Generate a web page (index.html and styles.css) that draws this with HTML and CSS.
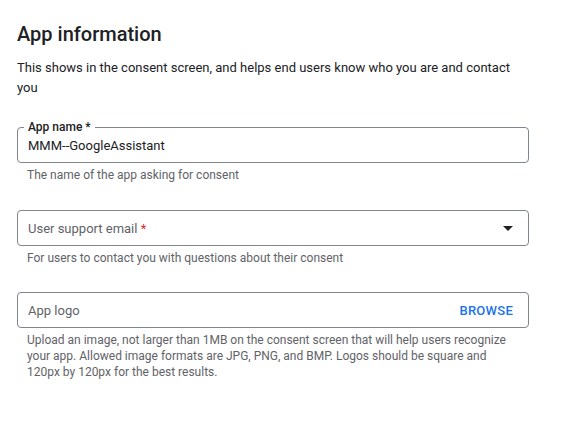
FILE: index.html
```html
<!DOCTYPE html>
<html>
<head>
<meta charset="utf-8">
<link rel="stylesheet" href="styles.css">
</head>
<body>
<main class="page">
  <h1 class="title">App information</h1>
  <p class="desc">This shows in the consent screen, and helps end users know who you are and contact you</p>

  <div class="field">
    <div class="box filled">
      <span class="float-label">App name *</span>
      <span class="value">MMM--GoogleAssistant</span>
    </div>
    <div class="hint">The name of the app asking for consent</div>
  </div>

  <div class="field">
    <div class="box">
      <span class="placeholder">User support email <span class="req">*</span></span>
      <svg class="arrow" width="10" height="5" viewBox="0 0 10 5"><path d="M0 0 L10 0 L5 5 Z" fill="#202124"/></svg>
    </div>
    <div class="hint">For users to contact you with questions about their consent</div>
  </div>

  <div class="field last">
    <div class="box">
      <span class="placeholder">App logo</span>
      <span class="browse">BROWSE</span>
    </div>
    <div class="hint">Upload an image, not larger than 1MB on the consent screen that will help users recognize your app. Allowed image formats are JPG, PNG, and BMP. Logos should be square and 120px by 120px for the best results.</div>
  </div>
</main>
</body>
</html>
```

FILE: styles.css
```css
html, body {
  margin: 0;
  padding: 0;
  background: #ffffff;
}
body {
  font-family: Roboto, "Liberation Sans", sans-serif;
  color: #202124;
}
.page {
  width: 512px;
  padding: 20px 0 0 17px;
  display: flex;
  flex-direction: column;
}
.title {
  margin: 0;
  font-size: 20px;
  font-weight: 500;
  line-height: 28px;
  color: #202124;
}
.desc {
  margin: 10px 0 0 0;
  font-size: 13px;
  line-height: 20px;
  color: #202124;
}
.field {
  display: flex;
  flex-direction: column;
  margin-top: 29px;
}
.field + .field {
  margin-top: 27px;
}
.field + .field.last {
  margin-top: 26px;
}
.box {
  position: relative;
  height: 36px;
  box-sizing: border-box;
  border: 1px solid #80868b;
  border-radius: 4px;
  display: flex;
  align-items: center;
  justify-content: space-between;
  padding: 0 15px 0 10px;
}
.float-label {
  position: absolute;
  top: -9px;
  left: 6px;
  padding: 0 4px;
  background: #fff;
  font-size: 12px;
  font-weight: 500;
  line-height: 16px;
  color: #202124;
}
.value {
  font-size: 13px;
  color: #202124;
  padding-top: 1px;
}
.placeholder {
  font-size: 13px;
  color: #5f6368;
}
.req {
  color: #d93025;
}
.arrow {
  display: block;
}
.browse {
  font-size: 13px;
  font-weight: 500;
  letter-spacing: 0.25px;
  color: #1a73e8;
}
.hint {
  margin-top: 4px;
  padding: 0 22px 0 10px;
  font-size: 12px;
  line-height: 16px;
  color: #5f6368;
}
```
